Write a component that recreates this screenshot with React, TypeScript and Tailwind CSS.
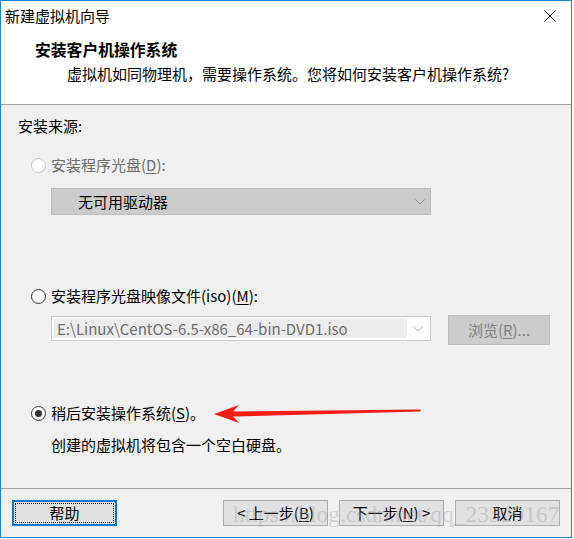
import React from "react";

function Radio({ checked, disabled }: { checked?: boolean; disabled?: boolean }) {
  return (
    <span
      className={`flex h-[15px] w-[15px] shrink-0 items-center justify-center rounded-full border bg-white ${
        disabled ? "border-[#c4c4c4]" : "border-[#333333]"
      }`}
    >
      {checked && <span className="h-[7px] w-[7px] rounded-full bg-[#333333]" />}
    </span>
  );
}

function Chevron({ color }: { color: string }) {
  return (
    <svg width="10" height="6" viewBox="0 0 10 6" className="shrink-0">
      <path d="M0.5 0.5L5 5L9.5 0.5" fill="none" stroke={color} strokeWidth="1" />
    </svg>
  );
}

export default function App() {
  return (
    <div className="h-[539px] w-[574px] bg-white font-['Noto_Sans_CJK_SC',sans-serif] text-[15px] text-black">
      <div className="flex h-[538px] w-[572px] flex-col border border-[#1883d7] bg-white">
        {/* Title bar */}
        <div className="flex h-[30px] shrink-0 items-center justify-between pl-[4px] pr-[15px]">
          <span className="leading-[20px]">新建虚拟机向导</span>
          <svg width="12" height="12" viewBox="0 0 12 12">
            <path d="M0.5 0.5L11.5 11.5M11.5 0.5L0.5 11.5" stroke="#000" strokeWidth="1" />
          </svg>
        </div>

        {/* Header */}
        <div className="h-[73px] shrink-0">
          <div className="mt-[9px] pl-[34px] text-[15.8px] font-bold leading-[20px]">安装客户机操作系统</div>
          <div className="mt-[4px] pl-[66px] leading-[20px]">
            虚拟机如同物理机，需要操作系统。您将如何安装客户机操作系统?
          </div>
        </div>
        <div className="h-px shrink-0 bg-[#a0a0a0]" />

        {/* Body */}
        <div className="flex flex-1 flex-col bg-[#f0f0f0]">
          <div className="flex-1 pl-[17px] pt-[11px]">
            <div className="leading-[20px]">安装来源:</div>

            <div className="ml-[13px] mt-[19px] flex h-[20px] items-center gap-[5px] leading-[20px] text-[#6d6d6d]">
              <Radio disabled />
              <span>
                安装程序光盘(<span className="underline underline-offset-2">D</span>):
              </span>
            </div>

            <div className="ml-[33px] mt-[13px] flex h-[27px] w-[380px] items-center justify-between border border-[#bcbcbc] bg-[#cccccc] pl-[26px] pr-[5px] leading-[20px]">
              <span>无可用驱动器</span>
              <Chevron color="#8a8a8a" />
            </div>

            <div className="ml-[13px] mt-[71px] flex h-[20px] items-center gap-[5px] leading-[20px]">
              <Radio />
              <span>
                安装程序光盘映像文件(iso)(<span className="underline underline-offset-2">M</span>):
              </span>
            </div>

            <div className="ml-[33px] mt-[9px] flex items-start gap-[17px]">
              <div className="mt-[1px] flex h-[25px] w-[380px] border border-[#cccccc] bg-white p-[2px]">
                <div className="flex h-full w-[353px] items-center bg-[#ececec] pl-[3px] leading-[19px] text-[#6d6d6d]">
                  E:\Linux\CentOS-6.5-x86_64-bin-DVD1.iso
                </div>
                <div className="flex flex-1 items-center justify-center">
                  <Chevron color="#b0b0b0" />
                </div>
              </div>
              <div className="flex h-[30px] w-[102px] items-center justify-center border border-[#bfbfbf] bg-[#cccccc] leading-[20px] text-[#838383]">
                浏览(<span className="underline underline-offset-2">R</span>)...
              </div>
            </div>

            <div className="relative ml-[13px] mt-[58px] flex h-[20px] items-center gap-[5px] leading-[20px]">
              <Radio checked />
              <span>
                稍后安装操作系统(<span className="underline underline-offset-2">S</span>)。
              </span>
              <svg
                className="pointer-events-none absolute left-[181px] top-[-2px]"
                width="212"
                height="24"
                viewBox="0 0 212 24"
              >
                <polygon
                  points="2,13 27,4 21,10.5 208,8.6 209,9.6 208,10.6 21,15.5 27,22"
                  fill="#f41d14"
                />
              </svg>
            </div>

            <div className="ml-[33px] mt-[12px] leading-[20px]">创建的虚拟机将包含一个空白硬盘。</div>
          </div>

          <div className="h-px shrink-0 bg-[#a0a0a0]" />

          {/* Footer */}
          <div className="relative flex shrink-0 items-center justify-between px-[11px] py-[11px]">
            <div className="h-[26px] w-[105px] border-2 border-[#0078d7] bg-[#e1e1e1] p-px">
              <div className="flex h-full w-full items-center justify-center border border-dotted border-black leading-[20px]">
                帮助
              </div>
            </div>
            <div className="flex gap-[11px]">
              <div className="flex h-[26px] w-[105px] items-center justify-center border border-[#adadad] bg-[#e1e1e1] leading-[20px]">
                &lt; 上一步(<span className="underline underline-offset-2">B</span>)
              </div>
              <div className="flex h-[26px] w-[105px] items-center justify-center border border-[#adadad] bg-[#e1e1e1] leading-[20px]">
                下一步(<span className="underline underline-offset-2">N</span>) &gt;
              </div>
              <div className="flex h-[26px] w-[105px] items-center justify-center border border-[#adadad] bg-[#e1e1e1] leading-[20px]">
                取消
              </div>
            </div>
            <span className="pointer-events-none absolute left-[232px] top-[12px] whitespace-nowrap font-['Liberation_Serif',serif] text-[23.5px] leading-[26px] text-[#a0a0a0]/40">
              https://blog.csdn.net/qq_23329167
            </span>
          </div>
        </div>
      </div>
    </div>
  );
}
